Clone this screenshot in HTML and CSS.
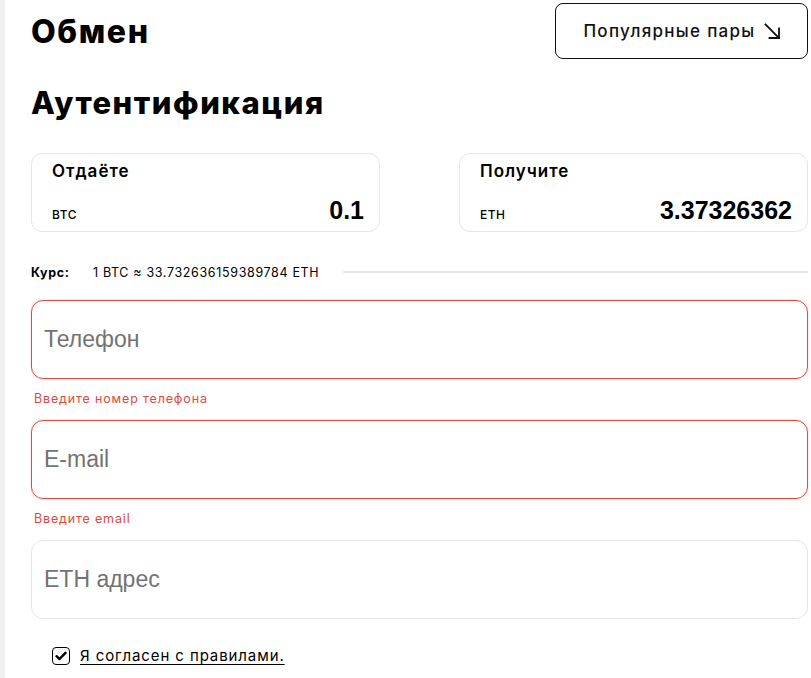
FILE: index.html
```html
<!DOCTYPE html>
<html lang="ru">
<head>
<meta charset="utf-8">
<link rel="stylesheet" href="styles.css">
</head>
<body>
<div class="page">
  <div class="strip"></div>
  <main class="main">
    <div class="top">
      <h1 class="title">Обмен</h1>
      <button class="pairs">Популярные пары
        <svg class="arrow" width="19" height="19" viewBox="0 0 19 19" fill="none" stroke="#111" stroke-width="1.8" stroke-linecap="square"><path d="M2.5 2.5 L16 16"/><path d="M16 6.5 V16 H6.5"/></svg>
      </button>
    </div>
    <h2 class="subtitle">Аутентификация</h2>
    <div class="cards">
      <div class="card">
        <div class="card-label">Отдаёте</div>
        <div class="card-row"><span class="cur">BTC</span><span class="amount">0.1</span></div>
      </div>
      <div class="card">
        <div class="card-label">Получите</div>
        <div class="card-row"><span class="cur">ETH</span><span class="amount">3.37326362</span></div>
      </div>
    </div>
    <div class="rate">
      <span class="rate-label">Курс:</span>
      <span class="rate-value">1 BTC ≈ 33.732636159389784 ETH</span>
      <span class="rate-line"></span>
    </div>
    <div class="field">
      <div class="input error">Телефон</div>
      <div class="err">Введите номер телефона</div>
    </div>
    <div class="field">
      <div class="input error">E-mail</div>
      <div class="err">Введите email</div>
    </div>
    <div class="field">
      <div class="input">ETH адрес</div>
    </div>
    <label class="agree">
      <span class="box"><svg width="12" height="10" viewBox="0 0 12 10" fill="none" stroke="#000" stroke-width="2.4" stroke-linecap="round" stroke-linejoin="round"><path d="M1.5 5.2 L4.5 8 L10.5 1.8"/></svg></span>
      <span class="agree-text">Я согласен с правилами.</span>
    </label>
  </main>
</div>
</body>
</html>
```
FILE: styles.css
```css
* { box-sizing: border-box; }
html, body { margin: 0; padding: 0; background: #fff; }
body { font-family: Inter, "Noto Sans", sans-serif; color: #000; overflow: hidden; }
.page { display: flex; min-height: 678px; }
.strip { width: 5px; background: #efefef; flex: none; }
.main { padding-left: 26px; width: 803px; flex: none; }
.top { display: flex; justify-content: space-between; align-items: flex-start; height: 68px; }
.title { margin: 14px 0 0; font-size: 32px; font-weight: 800; line-height: 36px; letter-spacing: 1.6px; }
.pairs { margin-top: 3px; width: 253px; height: 56px; border: 1px solid #111; border-radius: 8px; background: #fff; font-family: inherit; font-size: 17px; font-weight: 500; letter-spacing: 1.3px; color: #111; display: flex; align-items: center; justify-content: center; gap: 7px; padding: 0 0 0 2px; cursor: pointer; }
.arrow { margin-top: 1px; }
.subtitle { margin: 17px 0 0; font-size: 31px; font-weight: 800; line-height: 36px; letter-spacing: 1.5px; }
.cards { display: flex; justify-content: space-between; margin-top: 32px; }
.card { width: 349px; height: 79px; border: 1px solid #e6e6e6; border-radius: 11px; padding: 6px 15px 0 20px; }
.card-label { font-size: 17px; font-weight: 600; line-height: 22px; letter-spacing: 1px; }
.card-row { display: flex; justify-content: space-between; align-items: baseline; margin-top: 14px; }
.cur { font-size: 12px; font-weight: 500; letter-spacing: 0.5px; }
.amount { font-family: "Liberation Sans", Arial, sans-serif; font-weight: 700; font-size: 25px; }
.rate { display: flex; align-items: center; margin-top: 30px; height: 20px; font-size: 12.5px; }
.rate-label { font-weight: 700; width: 62px; letter-spacing: 0.6px; }
.rate-value { font-weight: 400; letter-spacing: 0.65px; }
.rate-line { flex: 1; height: 2px; background: #e6e6e6; margin-left: 24px; }
.field { margin-top: 18px; }
.field + .field { margin-top: 0; }
.input { height: 79px; border: 1px solid #e6e6e6; border-radius: 12px; padding-left: 12px; display: flex; align-items: center; font-family: "Liberation Sans", Arial, sans-serif; font-size: 23px; color: #737373; }
.input.error { border-color: #e8473a; box-shadow: 0 0 2px rgba(232, 71, 58, 0.35); }
.err { color: #e8473a; font-size: 12.5px; line-height: 16px; padding: 12px 0 13px 3px; letter-spacing: 0.85px; }
.agree { display: flex; align-items: center; margin-top: 27px; margin-left: 21px; gap: 10px; cursor: pointer; }
.box { width: 18px; height: 18px; border: 1.5px solid #000; border-radius: 4px; display: flex; align-items: center; justify-content: center; }
.agree-text { font-size: 15px; text-decoration: underline; text-underline-offset: 3px; letter-spacing: 0.9px; }
```
